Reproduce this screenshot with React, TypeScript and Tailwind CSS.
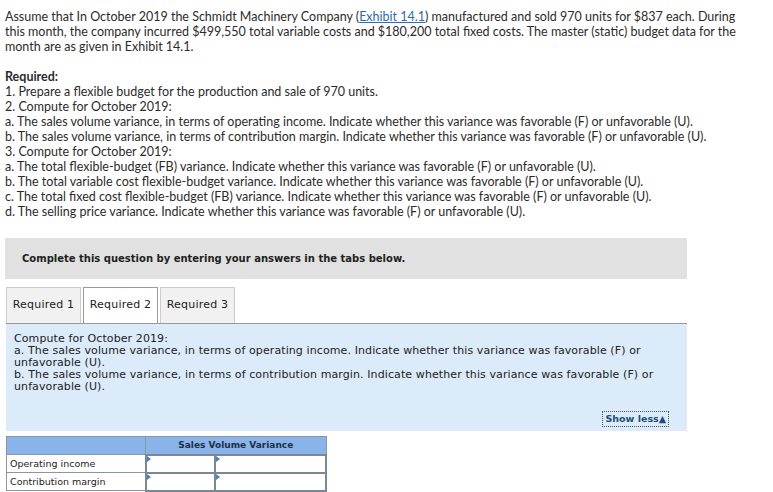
const intro = [
  "1. Prepare a flexible budget for the production and sale of 970 units.",
  "2. Compute for October 2019:",
  "a. The sales volume variance, in terms of operating income. Indicate whether this variance was favorable (F) or unfavorable (U).",
  "b. The sales volume variance, in terms of contribution margin. Indicate whether this variance was favorable (F) or unfavorable (U).",
  "3. Compute for October 2019:",
  "a. The total flexible-budget (FB) variance. Indicate whether this variance was favorable (F) or unfavorable (U).",
  "b. The total variable cost flexible-budget variance. Indicate whether this variance was favorable (F) or unfavorable (U).",
  "c. The total fixed cost flexible-budget (FB) variance. Indicate whether this variance was favorable (F) or unfavorable (U).",
  "d. The selling price variance. Indicate whether this variance was favorable (F) or unfavorable (U).",
];

const tabs = ["Required 1", "Required 2", "Required 3"];

function InputCell({ className }: { className: string }) {
  return (
    <td className={`relative h-[18px] border-2 border-[#7a8796] bg-white p-0 ${className}`}>
      <span className="absolute left-0 top-0 h-0 w-0 border-y-[3px] border-l-[4px] border-y-transparent border-l-[#4a7fc1]" />
    </td>
  );
}

export default function App() {
  return (
    <div className="h-[492px] w-[773px] overflow-hidden bg-white text-[#333]">
      <div className="w-[755px] px-[5px] pt-[9px] font-['Lato',sans-serif] text-[12.5px] leading-[15px] text-[#2b2b2b]">
        <p>
          Assume that In October 2019 the Schmidt Machinery Company (
          <span className="text-[#2a6ab8] underline">Exhibit 14.1</span>) manufactured and sold 970 units for $837
          each. During this month, the company incurred $499,550 total variable costs and $180,200 total fixed costs.
          The master (static) budget data for the month are as given in Exhibit 14.1.
        </p>
        <p className="mt-[15px] font-bold">Required:</p>
        {intro.map((line) => (
          <p key={line} className="whitespace-nowrap">
            {line}
          </p>
        ))}
      </div>

      <div className="mt-[19px] ml-[5px] flex h-[41px] w-[682px] items-center bg-[#e1e1e1] pl-[17px] font-['DejaVu_Sans',sans-serif] text-[10px] font-bold text-[#222]">
        Complete this question by entering your answers in the tabs below.
      </div>

      <div className="ml-[6px] mt-[8px] flex gap-[2px] font-['DejaVu_Sans',sans-serif] text-[11px] tracking-[0.2px] text-[#222]">
        {tabs.map((t, i) => (
          <div
            key={t}
            className={
              i === 1
                ? "flex h-[36px] w-[75px] items-center justify-center border border-b-0 border-[#9a9a9a] bg-white"
                : "flex h-[36px] w-[75px] items-center justify-center border border-b-0 border-[#cccccc] bg-[#f1f1f1]"
            }
          >
            {t}
          </div>
        ))}
      </div>

      <div className="ml-[6px] flex h-[108px] w-[681px] flex-col border-t border-[#9a9a9a] bg-[#dcebf9] px-[8px] pt-[9px] font-['DejaVu_Sans',sans-serif] text-[11px] leading-[12px] tracking-[0.1px] text-[#222]">
        <p>Compute for October 2019:</p>
        <p>
          a. The sales volume variance, in terms of operating income. Indicate whether this variance was favorable (F) or
          unfavorable (U).
        </p>
        <p>
          b. The sales volume variance, in terms of contribution margin. Indicate whether this variance was favorable (F)
          or unfavorable (U).
        </p>
        <div className="mt-auto mb-[4px] flex justify-end pr-[10px]">
          <span className="border border-dotted border-[#555] px-[2px] text-[9.5px] font-bold leading-[14px] tracking-normal text-[#1f4d7a]">
            Show less▲
          </span>
        </div>
      </div>

      <table className="ml-[6px] mt-[5px] w-[321px] border-collapse font-['DejaVu_Sans',sans-serif] text-[9.5px] leading-[12px] text-[#222]">
        <thead>
          <tr className="bg-[#89b4e9]">
            <th className="h-[18px] w-[139px] border border-[#8a96a3] p-0" />
            <th colSpan={2} className="h-[18px] border border-[#8a96a3] p-0 text-center text-[9px] font-bold text-[#1f2f45]">
              Sales Volume Variance
            </th>
          </tr>
        </thead>
        <tbody>
          {["Operating income", "Contribution margin"].map((row) => (
            <tr key={row}>
              <td className="h-[18px] border border-[#8a96a3] bg-white p-0 pl-[3px]">{row}</td>
              <InputCell className="w-[69px]" />
              <InputCell className="" />
            </tr>
          ))}
        </tbody>
      </table>
    </div>
  );
}
